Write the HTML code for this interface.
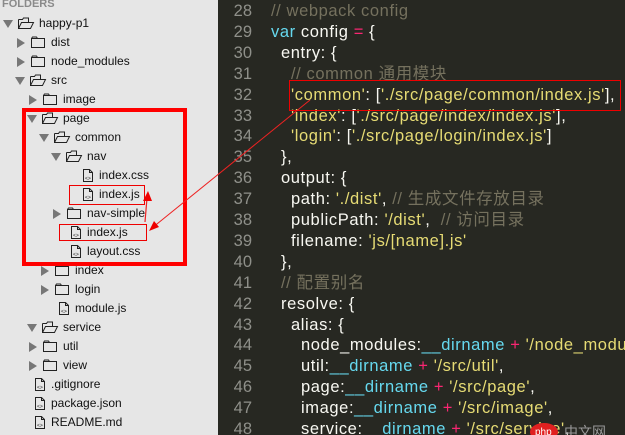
<!DOCTYPE html>
<html><head><meta charset="utf-8"><style>
*{margin:0;padding:0;box-sizing:border-box}
body{width:625px;height:435px;overflow:hidden;position:relative;background:#272822;font-family:"Liberation Sans","Noto Sans CJK SC",sans-serif}
#side{position:absolute;left:0;top:0;width:218px;height:435px;background:#e6e6e6;font-size:12px;color:#111}
.hd{position:absolute;left:2px;top:-2px;font-size:11px;font-weight:bold;color:#8a8a8a}
.r{position:absolute;height:19px;line-height:19px;white-space:nowrap}
.r svg{position:absolute;top:2px}
#ed{position:absolute;left:218px;top:0;width:407px;height:435px;background:#272822;font-size:16.5px;overflow:hidden}
.ln{position:absolute;left:0;width:34px;text-align:right;color:#8f908a;height:21px;line-height:21px}
.cd{position:absolute;white-space:pre;color:#f8f8f2;height:21px;line-height:21px;letter-spacing:0.6px}
.c{color:#75715e}.s{color:#e6db74}.k{color:#66d9ef}.o{color:#f92672}
</style></head><body>
<div id="side">
<div class="hd">FOLDERS</div>
<div id="tree"></div>
</div>
<div id="ed"></div>
<svg width="625" height="435" style="position:absolute;left:0;top:0">
<rect x="24" y="110" width="161" height="154" fill="none" stroke="#ff0000" stroke-width="4"/>
<rect x="69.5" y="185.5" width="75" height="19" fill="none" stroke="#e00" stroke-width="1"/>
<rect x="59.5" y="224.5" width="87" height="16" fill="none" stroke="#e00" stroke-width="1"/>
<rect x="289.5" y="80.5" width="331" height="30" fill="none" stroke="#e00" stroke-width="1"/>
<line x1="310" y1="100" x2="152" y2="228" stroke="#e22" stroke-width="1"/>
<polygon points="149,231 154,221 159,227" fill="#e00"/>
<line x1="145" y1="222" x2="147" y2="198" stroke="#e22" stroke-width="1.2"/>
<polygon points="148,191 143,201 152,201" fill="#e00"/>
<ellipse cx="544" cy="432" rx="14" ry="9" fill="#e02020"/>
<text x="535" y="435" font-size="10" fill="#fff" font-family="Liberation Sans">php</text>
<text x="564" y="437" font-size="14" fill="#999" font-family="Noto Sans CJK SC">中文网</text>
</svg>
<script>
var rows=[["happy-p1",0,"o"],["dist",1,"c"],["node_modules",1,"c"],["src",1,"o"],["image",2,"c"],["page",2,"o"],["common",3,"o"],["nav",4,"o"],["index.css",5,"f"],["index.js",5,"f"],["nav-simple",4,"c"],["index.js",4,"f"],["layout.css",4,"f"],["index",3,"c"],["login",3,"c"],["module.js",3,"f"],["service",2,"o"],["util",2,"c"],["view",2,"c"],[".gitignore",1,"f"],["package.json",1,"f"],["README.md",1,"f"]];
var h="";
rows.forEach(function(r,i){var t=39+12*r[1];var y=14+19*i;var s='<div class="r" style="top:'+y+'px;left:0;width:218px">';
if(r[2]=="f"){s+='<svg width="12" height="15" style="left:'+(t-17)+'px"><path d="M1.5 1.5h6l3 3v9h-9z M7.5 1.5v3h3" fill="none" stroke="#222"/><text x="3" y="12" font-size="5" fill="#222">&lt;&gt;</text></svg>';}
else{var ax=t-36;if(r[2]=="o"){s+='<svg width="10" height="10" style="left:'+ax+'px;top:5px"><path d="M0 1h10L5 9z" fill="#777"/></svg>';s+='<svg width="18" height="14" style="left:'+(t-22)+'px"><path d="M1.5 3.5v9h12l3-6h-12l-3 6 M1.5 3.5h4l1-1.5h5v4.5" fill="none" stroke="#222"/></svg>';}
else{s+='<svg width="10" height="10" style="left:'+(ax+1)+'px;top:5px"><path d="M1 0v10l8-5z" fill="#777"/></svg>';s+='<svg width="16" height="14" style="left:'+(t-21)+'px"><path d="M1.5 3.5h13v9h-13z M1.5 3.5l1-1.5h4l1 1.5" fill="none" stroke="#222"/></svg>';}}
s+='<span style="position:absolute;left:'+t+'px">'+r[0]+'</span></div>';h+=s;});
document.getElementById("tree").innerHTML=h;
var code=[
[0,'<span class="c">// webpack config</span>'],
[0,'<span class="k">var</span> config <span class="o">=</span> {'],
[1,'entry: {'],
[2,'<span class="c">// common 通用模块</span>'],
[2,'<span class="s">\'common\'</span>: [<span class="s">\'./src/page/common/index.js\'</span>],'],
[2,'<span class="s">\'index\'</span>: [<span class="s">\'./src/page/index/index.js\'</span>],'],
[2,'<span class="s">\'login\'</span>: [<span class="s">\'./src/page/login/index.js\'</span>]'],
[1,'},'],
[1,'output: {'],
[2,'path: <span class="s">\'./dist\'</span>, <span class="c">// 生成文件存放目录</span>'],
[2,'publicPath: <span class="s">\'/dist\'</span>,  <span class="c">// 访问目录</span>'],
[2,'filename: <span class="s">\'js/[name].js\'</span>'],
[1,'},'],
[1,'<span class="c">// 配置别名</span>'],
[1,'resolve: {'],
[2,'alias: {'],
[3,'node_modules:<span class="k">__dirname</span> <span class="o">+</span> <span class="s">\'/node_modules\'</span>,'],
[3,'util:<span class="k">__dirname</span> <span class="o">+</span> <span class="s">\'/src/util\'</span>,'],
[3,'page:<span class="k">__dirname</span> <span class="o">+</span> <span class="s">\'/src/page\'</span>,'],
[3,'image:<span class="k">__dirname</span> <span class="o">+</span> <span class="s">\'/src/image\'</span>,'],
[3,'service:<span class="k">__dirname</span> <span class="o">+</span> <span class="s">\'/src/service\'</span>,']];
var e="";code.forEach(function(c,i){var y=1+i*20.9;e+='<div class="ln" style="top:'+y+'px">'+(28+i)+'</div><div class="cd" style="top:'+y+'px;left:'+(53+c[0]*10)+'px">'+c[1]+'</div>';});
document.getElementById("ed").innerHTML=e;
</script>
</body></html>
